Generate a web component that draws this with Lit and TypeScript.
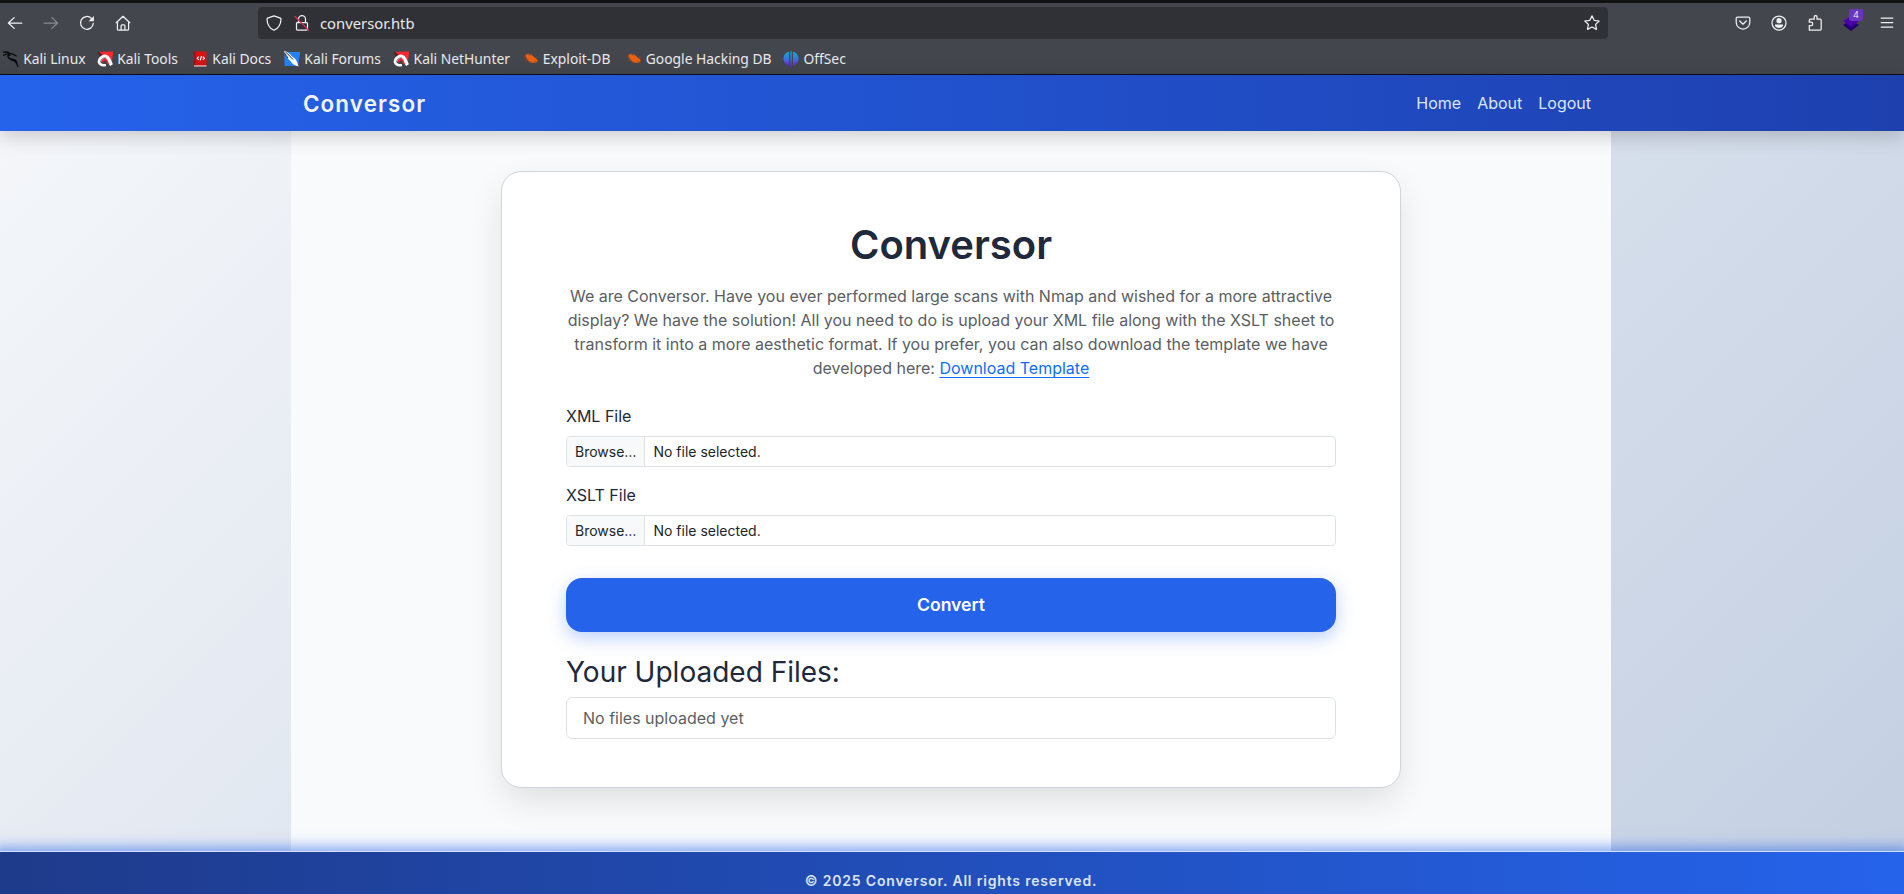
import { LitElement, html, css, svg } from "lit";
import { customElement } from "lit/decorators.js";
import { styleMap } from "lit/directives/style-map.js";

const bookmarks = [
  { label: "Kali Linux", icon: "dragon", width: 61.5 },
  { label: "Kali Tools", icon: "tools", width: 62.7 },
  { label: "Kali Docs", icon: "docs", width: 59.5 },
  { label: "Kali Forums", icon: "forums", width: 76.8 },
  { label: "Kali NetHunter", icon: "tools", width: 96.7 },
  { label: "Exploit-DB", icon: "bug", width: 70.5 },
  { label: "Google Hacking DB", icon: "bug", width: 125.2 },
  { label: "OffSec", icon: "offsec", width: 43.5 },
];

const glyphs: Record<string, unknown> = {
  dragon: svg`<g fill="none" stroke="#08090b" stroke-linecap="round"><path d="M.6 1.200C3 .8 5 .9 6.500 2.200c1.500.9 3.500.6 5 1.800M.6 4.300C3 2.800 5.500 2.900 7 4.200M11.500 4.200l1.800.8" stroke-width="1.300"/><path d="M6 3.300C4.200 5.500 5 7.400 8 7.900c2.800.3 5 .8 5.600 3.200M7 8c2 1.200 4.500 1.600 6 3.200 1 1.200 1.200 2.600 1.800 4" stroke-width="1.500"/></g>`,
  tools: svg`<path d="M3 .8 16.300.4 14.300 14 5 11Z" fill="#fb2733"/><path d="M0 .5 6 3.500 3 6Z" fill="#5a2027"/><path d="M2.300 11.500C2.300 7 7.500 3.600 10.600 6.400 12.600 8.200 13 11.800 14.500 14.200" fill="none" stroke="#fff" stroke-width="3.400"/><path d="M1.800 10.500c.8 3 3.700 4.200 7.200 3.400" fill="none" stroke="#fff" stroke-width="2.600"/><path d="M3.600 11C4 8 6.500 6.300 9 7.200" fill="none" stroke="#4d535e" stroke-width=".8"/><path d="M6 11.300c.5-1.500 1.800-2.200 3.300-1.500l1 2.700-2 .3Z" fill="#4a4043"/>`,
  docs: svg`<path d="M2.200.5h12.300V15H2.200Z" fill="#d81212"/><path d="M1.800.5h1.800V15H1.800Z" fill="#8e1420"/><path d="M2 14.300h12.500v1.300H2Z" fill="#e0c4c4"/><path d="M6.800 5.600 5.200 7.200l1.600 1.600M10.800 5.600l1.600 1.600-1.600 1.600M9.500 5 8.200 9.400" fill="none" stroke="#fff" stroke-width="1.100"/>`,
  forums: svg`<path d="M.3 1h15.900L14 15H.6Z" fill="#2582f5"/><path d="M0 0c3 .2 6 2.500 8 5.500 3 1.500 5.500 4.500 6.500 10-4-1-6.500-2.700-8-5.500C3.500 7.500 1.500 4 0 0Z" fill="#fff"/><path d="M1.500.8 9 8.500M.5 2 4 7" stroke="#20242c" stroke-width="1" fill="none"/>`,
  bug: svg`<path d="M2.500 3.800C5 2.800 8 3.400 10 5l4.800 4.300-1.300 1.900c-2.500 1.300-6 .6-8-1.300C3.500 8.200 2.200 6.200 2.500 3.800Z" fill="#ef5f12"/><path d="M.5 5.500 4 7M1.500 10l4-1.500M5 2l2 3M8.500 2.300l1 2.700M6 12.500 8 10M11 6.500l4-.5M11 10l4 2" stroke="#8f4a28" stroke-width=".7" fill="none"/>`,
  offsec: svg`<defs><linearGradient id="og" gradientUnits="userSpaceOnUse" x1="0" y1="0" x2="0" y2="16"><stop offset="0" stop-color="#12acc6"/><stop offset=".5" stop-color="#3d72dd"/><stop offset="1" stop-color="#6a1bc4"/></linearGradient></defs><path d="M6 .8v13.600C2.500 14 .5 11 .5 7.600S2.500 1.500 6 .8ZM10 .8v13.600c3.500-.4 5.500-3.400 5.500-6.800S13.500 1.500 10 .8ZM7.300.2h1.400v15.600H7.300Z" fill="url(#og)"/>`,
};

const icons = {
  back: svg`<path d="M14.800 8H1.400M7.200 2.600 1.400 8l5.800 5.400"/>`,
  forward: svg`<path d="M1.200 8h13.400M8.800 2.600 14.600 8l-5.800 5.400"/>`,
  reload: svg`<path d="M14.300 8.300A6.400 6.400 0 1 1 12.300 3.200L13.800 4.700"/><path d="M14.900.9v5.300H9.600Z" fill="currentColor" stroke="none"/>`,
  home: svg`<path d="M1.200 7.700 8 1.300l6.800 6.400M2.400 6.800v7.400c0 .5.300.8.800.8h9.600c.5 0 .8-.3.800-.8V6.800M6.100 15v-4.200c0-.6.400-1 1-1h1.800c.6 0 1 .4 1 1V15"/>`,
  shield: svg`<path d="M8 .9 14.300 3.200c.5.200.7.500.7 1C14.800 9.500 12.500 13.300 8 15.300 3.500 13.300 1.200 9.500 1 4.200c0-.5.200-.8.700-1Z"/>`,
  star: svg`<path d="m8 .9 2.200 4.400 5 .7-3.600 3.400.9 5L8 12l-4.500 2.400.9-5L.8 6l5-.7Z"/>`,
  pocket: svg`<path d="M2.500 2h11c.8 0 1.300.5 1.300 1.300V7.200c0 4-3 6.800-6.800 6.800S1.200 11.200 1.200 7.200V3.300C1.200 2.500 1.700 2 2.500 2ZM4.700 6 8 9.200 11.300 6"/>`,
  account: svg`<circle cx="8" cy="8" r="7"/><circle cx="8" cy="5.700" r="2.600" fill="currentColor" stroke="none"/><path d="M4 9.600h8v.9c0 1.600-2 2.500-4 2.500s-4-.9-4-2.500Z" fill="currentColor" stroke="none"/>`,
  puzzle: svg`<path d="M2.300 15h10.900c.6 0 1-.4 1-1V5.200c0-.6-.4-1-1-1H10V2a1.400 1.400 0 0 0-2.800 0v2.200H3.300c-.6 0-1 .4-1 1v2H4.100a1.700 1.700 0 0 1 0 3.400H2.300Z"/>`,
  menu: svg`<path d="M2.200 3h11.600M2.200 7.500h11.600M2.200 12h11.600"/>`,
};

const icon = (name: keyof typeof icons, cls = "") =>
  html`<svg class="ico ${cls}" viewBox="0 0 16 16">${icons[name]}</svg>`;

@customElement("browser-chrome")
class BrowserChrome extends LitElement {
  static styles = css`
    :host { display: block; height: 75px; box-sizing: border-box; background: #44464d; border-top: 3px solid #101113; border-bottom: 1px solid #0d0e12; color: #e9e9ec; font-family: "Noto Sans", sans-serif; }
    .bar { display: flex; align-items: center; height: 40px; box-sizing: border-box; padding: 0 9px 0 7px; }
    .nav { display: flex; gap: 20px; width: 251px; }
    .ico { display: block; width: 16px; height: 16px; flex: none; fill: none; stroke: currentColor; stroke-width: 1.25; stroke-linecap: round; stroke-linejoin: round; color: #f0f0f3; }
    .dim { opacity: .4; }
    .url { display: flex; align-items: center; width: 1350px; height: 32px; box-sizing: border-box; padding: 0 8px; border-radius: 4px; background: #303136; font-size: 14.800px; }
    .address { margin-left: 10px; flex: 1; line-height: 20px; }
    .lock { margin-left: 12px; }
    .actions { display: flex; margin-left: auto; gap: 20px; }
    .ext { position: relative; width: 16px; height: 16px; }
    .ext svg { display: block; width: 16px; height: 16px; }
    .badge { position: absolute; left: 6px; top: -6px; width: 14px; height: 12px; border-radius: 2px; background: #6a35bd; font-size: 9.500px; line-height: 11px; text-align: center; }
    .marks { display: flex; align-items: center; height: 31px; padding: 0 3px; gap: 12.300px; font-size: 13.850px; }
    .mark { display: flex; align-items: center; gap: 4.200px; white-space: nowrap; }
    .mark svg { flex: none; width: 16px; height: 16px; }
  `;
  render() {
    return html`
      <div class="bar">
        <div class="nav">${icon("back")}${icon("forward", "dim")}${icon("reload")}${icon("home")}</div>
        <div class="url">
          ${icon("shield")}
          <svg class="ico lock" viewBox="0 0 16 16"><path d="M4.500 7V4.200a3.500 3.500 0 0 1 7 0V7M3.500 7.500h9c.6 0 1 .4 1 1V14c0 .6-.4 1-1 1h-9c-.6 0-1-.4-1-1V8.500c0-.6.4-1 1-1Z"/><path d="M1 1.500 14.800 15.300" stroke="#e22850" stroke-width="1.200"/></svg>
          <span class="address">conversor.htb</span>
          ${icon("star")}
        </div>
        <div class="actions">
          ${icon("pocket")}${icon("account")}${icon("puzzle")}
          <div class="ext">
            <svg viewBox="0 0 16 16"><path d="m0 10 8-5 8 5-8 6Z" fill="#21006e"/><path d="m0 6 8-5 8 5-8 6Z" fill="#4a00a8"/></svg>
            <span class="badge">4</span>
          </div>
          ${icon("menu")}
        </div>
      </div>
      <div class="marks">
        ${bookmarks.map((b) => html`<div class="mark"><svg viewBox="0 0 16 16">${glyphs[b.icon]}</svg><span style=${styleMap({ width: `${b.width}px` })}>${b.label}</span></div>`)}
      </div>
    `;
  }
}

@customElement("app-root")
class AppRoot extends LitElement {
  static styles = css`
    :host { display: block; height: 894px; overflow: hidden; font-family: Inter, sans-serif; font-size: 16px; line-height: 24px; color: #1e293b; }
    .page { display: flex; flex-direction: column; height: 819px; background: linear-gradient(135deg, #f5f7fa, #c3cfe2); }
    .navbar { position: relative; z-index: 1; flex: none; display: flex; justify-content: center; height: 56px; background: linear-gradient(90deg, #2563eb, #1e40af); box-shadow: 0 5px 20px rgba(0, 0, 0, .19); }
    .navinner { display: flex; align-items: center; justify-content: space-between; width: 1320px; box-sizing: border-box; padding: 0 20px 0 12px; margin-right: 2px; }
    .brand { padding-top: 2px; font-size: 22.400px; font-weight: 600; letter-spacing: 1.120px; color: #f1f5f9; }
    .links { display: flex; gap: 16px; color: #dbe6fb; }
    .main { width: 1320px; height: 720px; box-sizing: border-box; align-self: center; margin-right: 2px; padding-top: 40px; background: #f8fafc; }
    .card { width: 900px; height: 617px; box-sizing: border-box; margin: 0 auto; padding: 49px 64px 0; border: 1px solid #d1d5db; border-radius: 20px; background: #fff; box-shadow: 0 14px 36px -4px rgba(0, 0, 0, .12); }
    h1 { margin: 0 0 15px; font-size: 40px; line-height: 48px; font-weight: 600; text-align: center; }
    .lead { margin: 0 0 24px; text-align: center; color: #5b5e63; }
    a { color: #0d6efd; text-decoration: underline; text-decoration-thickness: 1px; text-underline-offset: 3px; }
    .label { margin-bottom: 8px; }
    .file { display: flex; height: 31px; box-sizing: border-box; margin-bottom: 16px; border: 1px solid #dee2e6; border-radius: 4px; overflow: hidden; font-size: 14px; line-height: 29px; color: #212529; }
    .browse { padding: 0 8px; background: #f8f9fa; border-right: 1px solid #dee2e6; }
    .chosen { padding-left: 8px; }
    .convert { height: 54px; margin: 32px 0 23px; border-radius: 16px; background: #2563eb; color: #fff; font-size: 17.600px; font-weight: 600; line-height: 54px; text-align: center; box-shadow: 0 6px 18px rgba(37, 99, 235, .3); }
    h2 { margin: 0 0 8px; font-size: 28px; line-height: 34px; font-weight: 400; }
    .list { height: 42px; box-sizing: border-box; padding: 8px 16px; border: 1px solid #dee2e6; border-radius: 6px; color: #5d5f62; }
    .footer { position: relative; flex: none; height: 43px; box-sizing: border-box; padding: 17px 2px 0 0; border-top: 1px solid #d5dffa; background: linear-gradient(90deg, #1e3a8a, #2563eb); color: #dbe4f6; text-align: center; font-size: 14px; font-weight: 600; letter-spacing: .820px; box-shadow: 0 2px 12px 6px rgba(37, 99, 235, .55); }
  `;
  render() {
    const file = (label: string) => html`
      <div class="label">${label}</div>
      <div class="file"><span class="browse">Browse…</span><span class="chosen">No file selected.</span></div>`;
    return html`
      <browser-chrome></browser-chrome>
      <div class="page">
        <nav class="navbar"><div class="navinner">
          <span class="brand">Conversor</span>
          <div class="links"><span>Home</span><span>About</span><span>Logout</span></div>
        </div></nav>
        <main class="main">
          <section class="card">
            <h1>Conversor</h1>
            <p class="lead">We are Conversor. Have you ever performed large scans with Nmap and wished for a more attractive display? We have the solution! All you need to do is upload your XML file along with the XSLT sheet to transform it into a more aesthetic format. If you prefer, you can also download the template we have developed here: <a>Download Template</a></p>
            ${file("XML File")}${file("XSLT File")}
            <div class="convert">Convert</div>
            <h2>Your Uploaded Files:</h2>
            <div class="list">No files uploaded yet</div>
          </section>
        </main>
        <footer class="footer">© 2025 Conversor. All rights reserved.</footer>
      </div>
    `;
  }
}
